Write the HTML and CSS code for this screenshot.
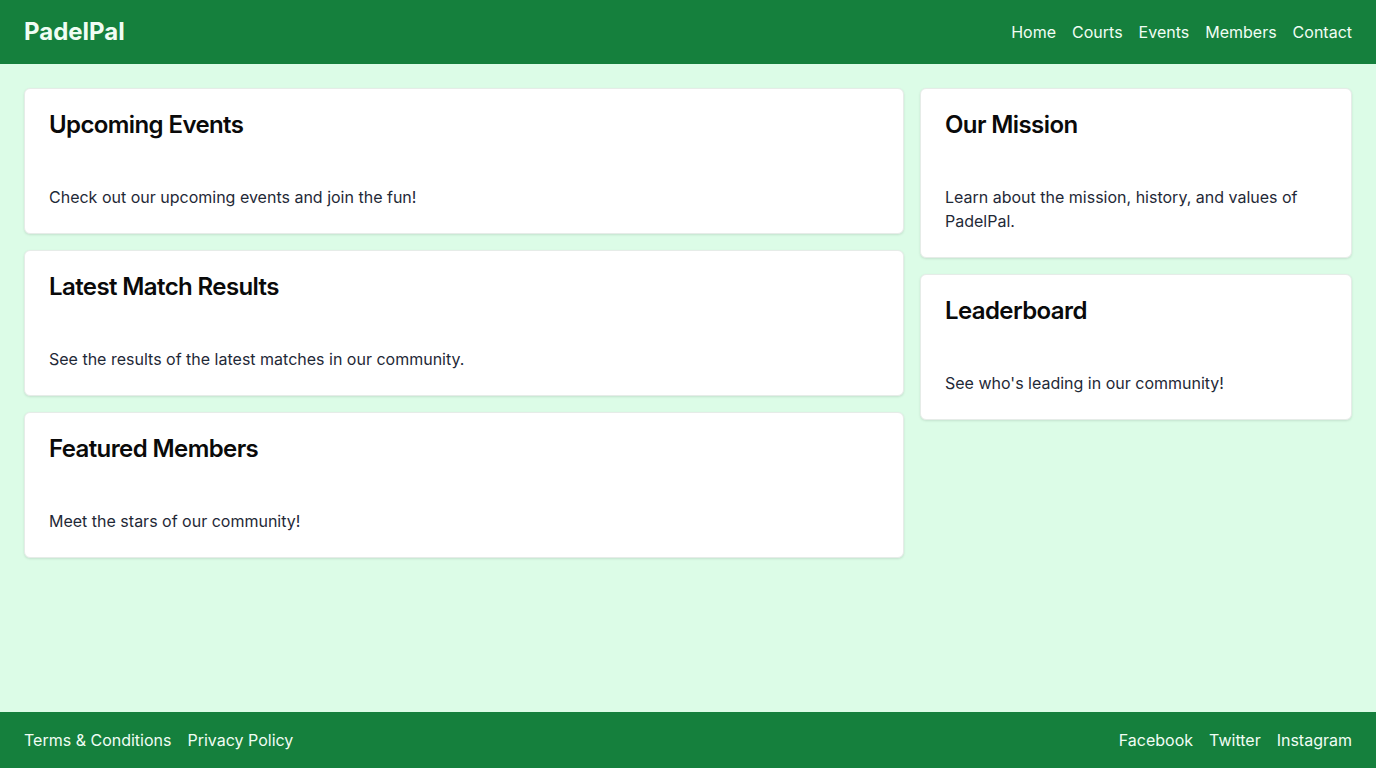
FILE: index.html
```html
<!DOCTYPE html>
<html lang="en">
<head>
<meta charset="utf-8">
<title>PadelPal</title>
<link rel="stylesheet" href="styles.css">
</head>
<body>
<div class="page">
  <header class="topbar">
    <div class="brand">PadelPal</div>
    <nav class="nav">
      <a href="#">Home</a>
      <a href="#">Courts</a>
      <a href="#">Events</a>
      <a href="#">Members</a>
      <a href="#">Contact</a>
    </nav>
  </header>
  <main class="main">
    <div class="grid">
      <div class="col col-main">
        <section class="card">
          <h2>Upcoming Events</h2>
          <p>Check out our upcoming events and join the fun!</p>
        </section>
        <section class="card">
          <h2>Latest Match Results</h2>
          <p>See the results of the latest matches in our community.</p>
        </section>
        <section class="card">
          <h2>Featured Members</h2>
          <p>Meet the stars of our community!</p>
        </section>
      </div>
      <div class="col col-side">
        <section class="card">
          <h2>Our Mission</h2>
          <p>Learn about the mission, history, and values of PadelPal.</p>
        </section>
        <section class="card">
          <h2>Leaderboard</h2>
          <p>See who's leading in our community!</p>
        </section>
      </div>
    </div>
  </main>
  <footer class="footer">
    <nav class="links">
      <a href="#">Terms &amp; Conditions</a>
      <a href="#">Privacy Policy</a>
    </nav>
    <nav class="links">
      <a href="#">Facebook</a>
      <a href="#">Twitter</a>
      <a href="#">Instagram</a>
    </nav>
  </footer>
</div>
</body>
</html>
```
FILE: styles.css
```css
* { box-sizing: border-box; }
html, body { margin: 0; padding: 0; }
body {
  font-family: Inter, "Noto Sans", sans-serif;
  background: #dcfce7;
  color: #111827;
}
.page {
  min-height: 100vh;
  display: flex;
  flex-direction: column;
}
.topbar {
  height: 64px;
  background: #15803d;
  color: #f0fdf4;
  display: flex;
  align-items: center;
  justify-content: space-between;
  padding: 0 24px;
}
.brand {
  font-size: 24px;
  font-weight: 700;
  line-height: 32px;
}
.nav, .links {
  display: flex;
  gap: 16px;
}
.nav a, .links a {
  color: #f0fdf4;
  text-decoration: none;
  font-size: 16px;
  line-height: 24px;
}
.main {
  flex: 1;
  padding: 24px;
}
.grid {
  display: grid;
  grid-template-columns: repeat(12, 1fr);
  gap: 16px;
  align-items: start;
}
.col {
  display: flex;
  flex-direction: column;
  gap: 16px;
}
.col-main { grid-column: span 8; }
.col-side { grid-column: span 4; }
.card {
  background: #ffffff;
  border: 1px solid #e6ece8;
  border-radius: 6px;
  padding: 24px;
  box-shadow: 0 1px 3px rgba(0,0,0,0.07), 0 1px 2px rgba(0,0,0,0.04);
}
.card h2 {
  margin: 0 0 48px;
  font-size: 24px;
  line-height: 24px;
  font-weight: 600;
  letter-spacing: -0.025em;
  color: #0a0a0a;
}
.card p {
  margin: 0;
  font-size: 16px;
  line-height: 24px;
  color: #1f2937;
}
.footer {
  height: 56px;
  background: #15803d;
  display: flex;
  align-items: center;
  justify-content: space-between;
  padding: 0 24px;
}
```
